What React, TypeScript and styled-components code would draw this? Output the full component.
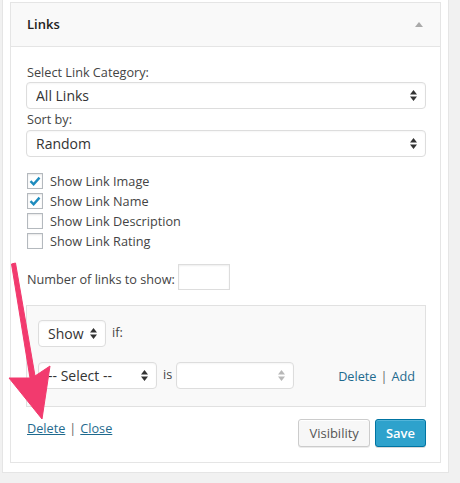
import React from "react";
import styled, { createGlobalStyle } from "styled-components";

const GlobalStyle = createGlobalStyle`
  body {
    margin: 0;
    background: #f1f1f1;
    font-family: "Open Sans", "Liberation Sans", sans-serif;
    font-size: 12.7px;
    color: #444;
  }
`;

const Page = styled.div`
  position: relative;
  width: 460px;
  height: 483px;
  overflow: hidden;
`;

const Panel = styled.div`
  margin-left: 2px;
  width: 431px;
  padding: 2px 7px 9px 7px;
  background: #fff;
  border: 1px solid #e5e5e5;
  border-top: none;
`;

const Widget = styled.div`
  border: 1px solid #e5e5e5;
  background: #fff;
`;

const Header = styled.div`
  height: 43px;
  display: flex;
  align-items: center;
  justify-content: space-between;
  padding: 0 15px 0 16px;
  background: #f9f9f9;
  border-bottom: 1px solid #e5e5e5;
`;

const Title = styled.span`
  font-weight: 600;
  font-size: 13px;
  color: #222;
  margin-top: -2px;
`;

const Toggle = styled.span`
  width: 0;
  height: 0;
  border-left: 4px solid transparent;
  border-right: 4px solid transparent;
  border-bottom: 5px solid #aaa;
  margin-right: 2px;
`;

const Body = styled.div`
  padding: 16px 14px 15px 15px;
`;

const Label = styled.div<{ $top?: number; $bottom?: number }>`
  line-height: 18px;
  margin: ${(p) => p.$top ?? 0}px 0 ${(p) => p.$bottom ?? 1}px 1px;
`;

const SelectWrap = styled.div<{ $width?: number }>`
  position: relative;
  width: ${(p) => (p.$width ? `${p.$width}px` : "100%")};
  flex: none;
`;

const Select = styled.select`
  display: block;
  appearance: none;
  -webkit-appearance: none;
  width: 100%;
  height: 27px;
  margin: 0;
  padding: 0 16px 0 9px;
  border: 1px solid #ddd;
  border-radius: 4px;
  background: #fff;
  box-shadow: inset 0 1px 2px rgba(0, 0, 0, 0.04);
  font-family: "Open Sans", "Liberation Sans", sans-serif;
  font-size: 14px;
  color: #333;
  outline: none;
`;

const Arrows = styled.svg<{ $faded?: boolean }>`
  position: absolute;
  right: 9px;
  top: 8px;
  width: 7px;
  height: 11px;
  pointer-events: none;
  fill: ${(p) => (p.$faded ? "#b8b8b8" : "#333")};
`;

const Dropdown: React.FC<{ value: string; width?: number; faded?: boolean }> = ({
  value,
  width,
  faded,
}) => (
  <SelectWrap $width={width}>
    <Select defaultValue={value}>
      <option value={value}>{value}</option>
    </Select>
    <Arrows $faded={faded} viewBox="0 0 7 11">
      <path d="M3.5 0 L7 4.5 L0 4.5 Z M0 6.5 L7 6.5 L3.5 11 Z" />
    </Arrows>
  </SelectWrap>
);

const CheckList = styled.div`
  margin-top: 14px;
  display: flex;
  flex-direction: column;
`;

const CheckRow = styled.label`
  display: flex;
  align-items: center;
  height: 20px;
  gap: 7px;
  margin-left: 1px;
`;

const Box = styled.span`
  position: relative;
  width: 14px;
  height: 14px;
  border: 1px solid #b4b9be;
  background: #fff;
  box-shadow: inset 0 1px 2px rgba(0, 0, 0, 0.1);
  flex: none;
`;

const Tick = styled.svg`
  position: absolute;
  left: 1px;
  top: 2px;
  width: 12px;
  height: 10px;
`;

const Check: React.FC<{ checked?: boolean; children: React.ReactNode }> = ({
  checked,
  children,
}) => (
  <CheckRow>
    <Box>
      {checked && (
        <Tick viewBox="0 0 12 10">
          <path d="M1.5 5.2 L4.6 8.3 L10.5 1.6" fill="none" stroke="#1e8cbe" strokeWidth="2.4" />
        </Tick>
      )}
    </Box>
    {children}
  </CheckRow>
);

const NumberRow = styled.div`
  margin-top: 13px;
  display: flex;
  align-items: center;
  gap: 3px;
  margin-left: 1px;
`;

const NumberText = styled.span`
  padding-top: 3px;
`;

const NumberInput = styled.input`
  display: block;
  width: 52px;
  height: 26px;
  box-sizing: border-box;
  border: 1px solid #ddd;
  box-shadow: inset 0 1px 2px rgba(0, 0, 0, 0.07);
  outline: none;
`;

const Conditions = styled.div`
  margin-top: 15px;
  padding: 14px 10px 17px 11px;
  background: #f9f9f9;
  border: 1px solid #e1e1e1;
  display: flex;
  flex-direction: column;
  gap: 15px;
`;

const CondRow = styled.div`
  display: flex;
  align-items: center;
  gap: 6px;
`;

const Word = styled.span`
  margin: -4px -2px 0 0;
`;

const RowLinks = styled.div`
  margin-left: auto;
`;

const Link = styled.a<{ $underline?: boolean }>`
  color: #1f6a8e;
  text-decoration: ${(p) => (p.$underline ? "underline" : "none")};
  cursor: pointer;
`;

const Sep = styled.span`
  color: #666;
  margin: 0 4px;
`;

const Footer = styled.div`
  margin-top: 12px;
  display: flex;
  align-items: flex-start;
`;

const FooterLinks = styled.div`
  margin-left: 1px;
  line-height: 18px;
`;

const Buttons = styled.div`
  margin-left: auto;
  display: flex;
  gap: 5px;
`;

const Button = styled.button<{ $primary?: boolean }>`
  height: 28px;
  padding: 0 10px;
  border-radius: 3px;
  font-family: "Open Sans", "Liberation Sans", sans-serif;
  font-size: 13px;
  cursor: pointer;
  border: 1px solid ${(p) => (p.$primary ? "#0074a2" : "#ccc")};
  background: ${(p) => (p.$primary ? "#2ea2cc" : "#f7f7f7")};
  color: ${(p) => (p.$primary ? "#fff" : "#555")};
  font-weight: ${(p) => (p.$primary ? 600 : 400)};
  box-shadow: ${(p) =>
    p.$primary
      ? "inset 0 1px 0 rgba(120,200,230,0.5), 0 1px 0 rgba(0,0,0,0.15)"
      : "inset 0 1px 0 #fff, 0 1px 0 rgba(0,0,0,0.08)"};
`;

const Pointer = styled.svg`
  position: absolute;
  left: 0;
  top: 0;
  width: 460px;
  height: 483px;
  pointer-events: none;
`;

export default function App() {
  return (
    <Page>
      <GlobalStyle />
      <Panel>
        <Widget>
          <Header>
            <Title>Links</Title>
            <Toggle />
          </Header>
          <Body>
            <Label>Select Link Category:</Label>
            <Dropdown value="All Links" />
            <Label $top={1} $bottom={2}>Sort by:</Label>
            <Dropdown value="Random" />
            <CheckList>
              <Check checked>Show Link Image</Check>
              <Check checked>Show Link Name</Check>
              <Check>Show Link Description</Check>
              <Check>Show Link Rating</Check>
            </CheckList>
            <NumberRow>
              <NumberText>Number of links to show:</NumberText>
              <NumberInput type="text" />
            </NumberRow>
            <Conditions>
              <CondRow>
                <Dropdown value="Show" width={68} />
                <Word>if:</Word>
              </CondRow>
              <CondRow>
                <Dropdown value="-- Select --" width={119} />
                <Word>is</Word>
                <Dropdown value="" width={118} faded />
                <RowLinks>
                  <Link>Delete</Link>
                  <Sep>|</Sep>
                  <Link>Add</Link>
                </RowLinks>
              </CondRow>
            </Conditions>
            <Footer>
              <FooterLinks>
                <Link $underline>Delete</Link>
                <Sep>|</Sep>
                <Link $underline>Close</Link>
              </FooterLinks>
              <Buttons>
                <Button>Visibility</Button>
                <Button $primary>Save</Button>
              </Buttons>
            </Footer>
          </Body>
        </Widget>
      </Panel>
      <Pointer viewBox="0 0 460 483">
        <path
          d="M11.5 264 L15.5 263 L35 376 L50 366 L42 419 L9 378 L30 378 Z"
          fill="#f23a6e"
          stroke="#f23a6e"
          strokeWidth="1"
          strokeLinejoin="round"
        />
      </Pointer>
    </Page>
  );
}
